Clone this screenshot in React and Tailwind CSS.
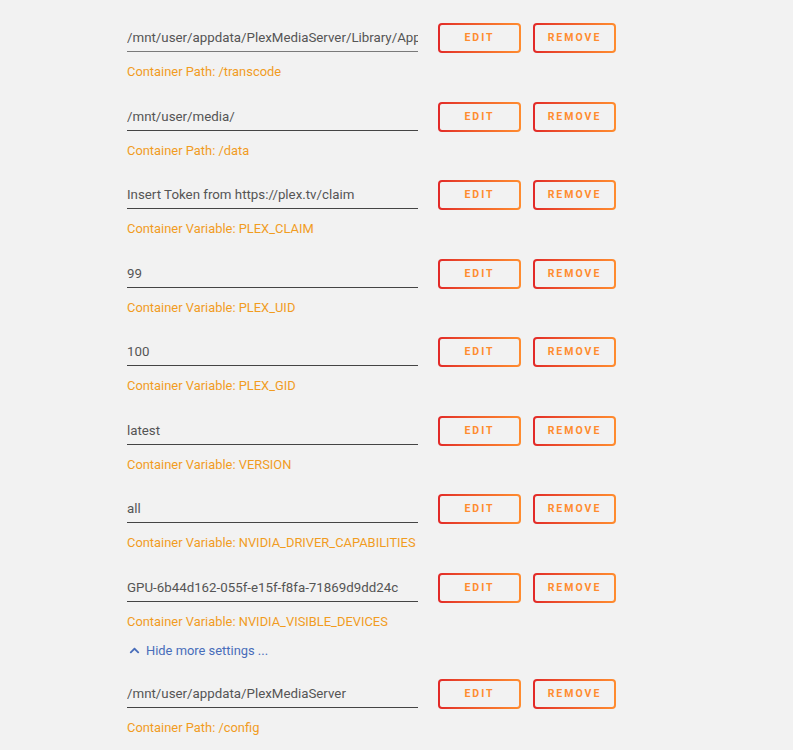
import React from 'react';
import { FaChevronUp } from 'react-icons/fa';

const settings = [
  { value: '/mnt/user/appdata/PlexMediaServer/Library/Application Support/Plex Media Server/Cache/Transcode', label: 'Container Path: /transcode', light: true },
  { value: '/mnt/user/media/', label: 'Container Path: /data' },
  { value: 'Insert Token from https://plex.tv/claim', label: 'Container Variable: PLEX_CLAIM' },
  { value: '99', label: 'Container Variable: PLEX_UID' },
  { value: '100', label: 'Container Variable: PLEX_GID' },
  { value: 'latest', label: 'Container Variable: VERSION' },
  { value: 'all', label: 'Container Variable: NVIDIA_DRIVER_CAPABILITIES' },
  { value: 'GPU-6b44d162-055f-e15f-f8fa-71869d9dd24c', label: 'Container Variable: NVIDIA_VISIBLE_DEVICES' },
];

function OutlineButton({ children }) {
  return (
    <button className="rounded-[4px] p-[2px] bg-linear-to-r from-[#e22828] to-[#ff8c2f]">
      <span className="h-[26px] w-[79px] rounded-[2px] bg-[#f2f2f2] flex items-center justify-center text-[10.5px] font-bold tracking-[2px] text-[#ff8c2f] uppercase">
        {children}
      </span>
    </button>
  );
}

function SettingRow({ value, label, light }) {
  return (
    <div className="h-[78.5px]">
      <div className="flex items-start">
        <input
          readOnly
          value={value}
          className={`w-[291px] h-[29px] pt-[1px] bg-transparent outline-none border-b ${light ? 'border-[#7a7a7a]' : 'border-[#444]'} text-[13.3px] text-[#555]`}
        />
        <div className="flex gap-[12px] ml-[20px]">
          <OutlineButton>Edit</OutlineButton>
          <OutlineButton>Remove</OutlineButton>
        </div>
      </div>
      <p className="mt-[11px] text-[12.9px] leading-[16px] text-[#f19c1f]">{label}</p>
    </div>
  );
}

export default function App() {
  return (
    <div
      className="min-h-[750px] bg-[#f2f2f2] pl-[127px] pt-[23px]"
      style={{ fontFamily: 'Roboto, "Open Sans", sans-serif' }}
    >
      {settings.map((s) => (
        <SettingRow key={s.label} {...s} />
      ))}
      <div className="-mt-[10px] mb-[19px] flex items-center gap-[6px] text-[12.9px] text-[#486dba] pl-[2px]">
        <FaChevronUp className="w-[11px] h-[11px]" />
        <span>Hide more settings ...</span>
      </div>
      <SettingRow value="/mnt/user/appdata/PlexMediaServer" label="Container Path: /config" />
    </div>
  );
}
